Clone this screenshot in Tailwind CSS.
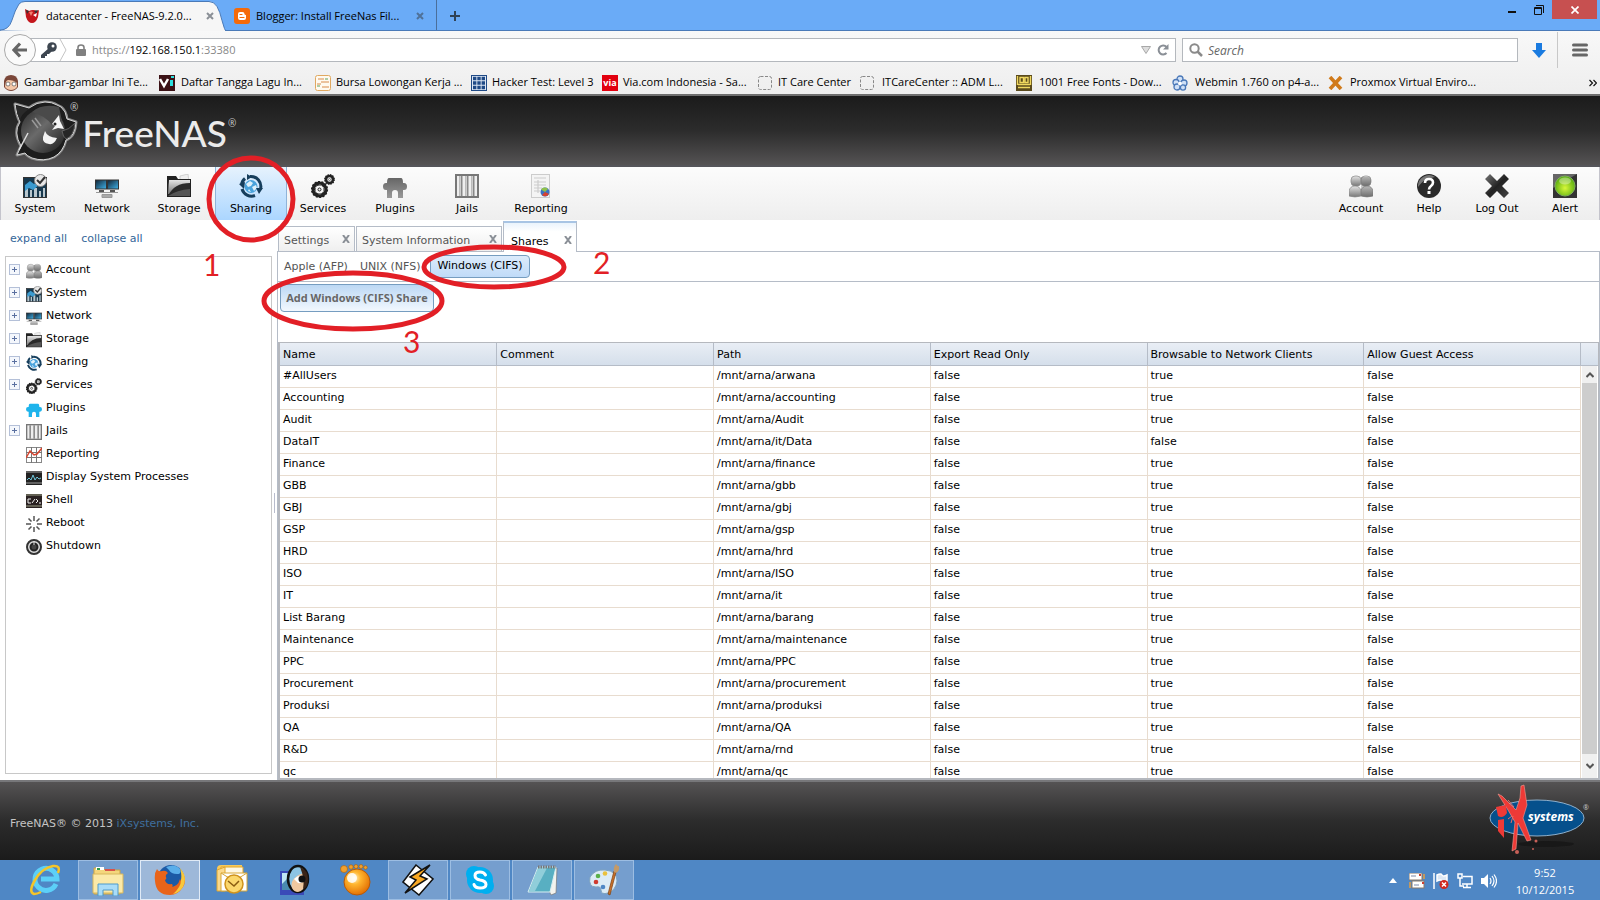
<!DOCTYPE html>
<html lang="en">

<head>
    <meta charset="UTF-8" />
    <meta name="viewport" content="width=device-width, initial-scale=1.0" />
    <title>datacenter - FreeNAS-9.2.0</title>
    <script src="https://cdn.jsdelivr.net/npm/@tailwindcss/browser@4"></script>
</head>

<body class="relative flex h-screen flex-col overflow-hidden bg-white font-['Open_Sans',sans-serif] text-[11px] text-black">

    <!-- Icon symbols -->
    <svg class="absolute size-0">
        <defs>
            <linearGradient id="g-steel" x1="0" y1="0" x2="0" y2="1">
                <stop offset="0" stop-color="#e4e4e4" />
                <stop offset="1" stop-color="#777" />
            </linearGradient>
            <linearGradient id="g-dark" x1="0" y1="0" x2="1" y2="1">
                <stop offset="0" stop-color="#777" />
                <stop offset=".5" stop-color="#222" />
                <stop offset="1" stop-color="#444" />
            </linearGradient>
            <linearGradient id="g-screen" x1="0" y1="0" x2="1" y2="1">
                <stop offset="0" stop-color="#123" />
                <stop offset="1" stop-color="#3fb3ea" />
            </linearGradient>
            <linearGradient id="g-plug" x1="0" y1="0" x2="0" y2="1">
                <stop offset="0" stop-color="#666" />
                <stop offset="1" stop-color="#999" />
            </linearGradient>
            <radialGradient id="g-green" cx=".5" cy=".6" r=".6">
                <stop offset="0" stop-color="#d8f83a" />
                <stop offset="1" stop-color="#4fa80c" />
            </radialGradient>
            <radialGradient id="g-orange" cx=".4" cy=".35" r=".7">
                <stop offset="0" stop-color="#fff3c8" />
                <stop offset=".35" stop-color="#ffb52e" />
                <stop offset="1" stop-color="#e06a00" />
            </radialGradient>
            <linearGradient id="g-shark" x1="0" y1="0" x2="1" y2="1">
                <stop offset="0" stop-color="#2a2a2a" />
                <stop offset=".45" stop-color="#6a6a6a" />
                <stop offset="1" stop-color="#1a1a1a" />
            </linearGradient>
        </defs>
        <symbol id="i-account" viewBox="0 0 24 24">
            <g fill="url(#g-steel)" stroke="#888" stroke-width=".7">
                <rect x="2" y="2" width="10" height="10" rx="4" />
                <rect x="12" y="2" width="10" height="10" rx="4" />
                <path d="M0 22v-5q1-5 6-5t6 5v5q-6 2-12 0z" />
                <path d="M12 22v-5q1-5 6-5t6 5v5q-6 2-12 0z" />
            </g>
            <path d="M12 3h7q3 0 3 4t-3 5q5 1 5 6v4q-6 2-12 0z" fill="#555" opacity=".3" />
        </symbol>
        <symbol id="i-system" viewBox="0 0 24 24">
            <rect x=".5" y="3.500" width="23" height="20" fill="#17384d" stroke="#333" />
            <path d="M2 23V13h3v10zM7 23v-7h2v7zM11 23V14h3v9zM16 23v-6h2v6zM20 23v-9h2v9z" fill="#b9c6cd" />
            <path d="M2 11l5-4 4 3 5-4v5l-6 5-4-2-4 3z" fill="#3b9bd0" />
            <circle cx="17.500" cy="6.500" r="6" fill="#e8e8e8" stroke="#888" />
            <path d="M14 6l3 3 5-6" fill="none" stroke="#333" stroke-width="2" />
        </symbol>
        <symbol id="i-network" viewBox="0 0 24 24">
            <rect x=".5" y="6" width="11" height="9" fill="url(#g-screen)" stroke="#333" />
            <rect x="12.500" y="6" width="11" height="9" fill="url(#g-screen)" stroke="#333" />
            <path d="M4 16h5v2H4zM15 16h5v2h-5z" fill="#555" />
            <path d="M1 18.500h22M7 20.500h10v3H7z" fill="#aaa" stroke="#999" />
        </symbol>
        <symbol id="i-storage" viewBox="0 0 24 24">
            <path d="M13 2l8-2 1 8H13z" fill="#eee" stroke="#bbb" stroke-width=".6" />
            <path d="M0 2h9l2 3h13v18H0z" fill="#222" />
            <path d="M1 20L2 6h21v14z" fill="url(#g-steel)" />
            <path d="M1 22Q7 9 23 9v13z" fill="#2a2a2a" />
            <path d="M1 22q9-6 22-7v7z" fill="#555" />
        </symbol>
        <symbol id="i-sharing" viewBox="0 0 24 24">
            <circle cx="12" cy="12.500" r="6.500" fill="#4aa3dc" />
            <path d="M7 10l4-3 3 2-2 3-3 1zM13 13l4-2 1 3-3 3zM10 15l2 3-3-1z" fill="#dff1fb" />
            <g fill="none" stroke="#163e5c" stroke-width="3">
                <path d="M11 2.500A10 10 0 0 1 21.500 15" />
                <path d="M16 21.500A10 10 0 0 1 3 15" />
                <path d="M2.500 11A10 10 0 0 1 6 4.500" />
            </g>
            <path d="M17 14h7l-4 6zM0 10l6-2-1 7zM8 6V0l5 3z" fill="#163e5c" />
        </symbol>
        <symbol id="i-services" viewBox="0 0 24 24">
            <g fill="none" stroke="#222">
                <circle cx="8.500" cy="15.500" r="6" stroke-width="4" />
                <circle cx="8.500" cy="15.500" r="7.800" stroke-width="1.600" stroke-dasharray="2 1.500" />
                <circle cx="8.500" cy="15.500" r="4.500" stroke="#999" stroke-width="1" stroke-dasharray="3 2" />
                <circle cx="8.500" cy="15.500" r="1.500" />
                <circle cx="18.500" cy="5.500" r="3.500" stroke-width="2.600" />
                <circle cx="18.500" cy="5.500" r="4.800" stroke-width="1.200" stroke-dasharray="1.500 1" />
                <circle cx="18.500" cy="5.500" r="1" stroke="#777" />
            </g>
        </symbol>
        <symbol id="i-plugins" viewBox="0 0 24 24">
            <path d="M6 4h12q2 0 2 5h1q3 0 3 3.500T21 16h-1v8h-5v-5q0-3-3-3t-3 3v5H4v-8H3q-3 0-3-3.500T3 9h1q0-5 2-5z" fill="currentColor" />
        </symbol>
        <symbol id="i-plugins-lg" viewBox="0 0 24 24">
            <path d="M6 4h12q2 0 2 5h1q3 0 3 3.500T21 16h-1v8h-5v-5q0-3-3-3t-3 3v5H4v-8H3q-3 0-3-3.500T3 9h1q0-5 2-5z" fill="url(#g-plug)" />
        </symbol>
        <symbol id="i-jails" viewBox="0 0 24 24">
            <rect x="1" y="1" width="22" height="22" fill="#eee" stroke="#777" stroke-width="2" />
            <path d="M6 2v20M12 2v20M18 2v20" stroke="#888" stroke-width="3" />
            <path d="M5.500 2v20M11.500 2v20M17.500 2v20" stroke="#ccc" stroke-width="1" />
        </symbol>
        <symbol id="i-report" viewBox="0 0 24 24">
            <rect x="2.500" y=".5" width="18" height="23" fill="#f4f4f4" stroke="#ccc" />
            <path d="M5 4h12M5 8h12M5 11h12M5 14h8M5 17h6M9 6v13" stroke="#ccc" stroke-width="1.200" />
            <circle cx="16" cy="18" r="4.500" fill="#3a72c4" />
            <path d="M16 18l-4-2.500A4.500 4.500 0 0 1 19 15z" fill="#8fc14a" />
            <path d="M16 18l4 2a4.500 4.500 0 0 1-7 1z" fill="#d8412f" />
        </symbol>
        <symbol id="i-help" viewBox="0 0 24 24">
            <circle cx="12" cy="12" r="12" fill="#2a2a2a" />
            <path d="M1 13A11 11 0 0 1 18 3Q6 5 1 13z" fill="#777" />
            <path d="M8 9q0-4 4-4t4 3.500q0 2-2 3.500t-2 3.500" fill="none" stroke="#fff" stroke-width="2.600" />
            <rect x="10.500" y="17" width="3" height="3" fill="#fff" />
        </symbol>
        <symbol id="i-logout" viewBox="0 0 24 24">
            <path d="M5 0l7 7 7-7 5 5-7 7 7 7-5 5-7-7-7 7-5-5 7-7-7-7z" fill="url(#g-dark)" />
        </symbol>
        <symbol id="i-alert" viewBox="0 0 24 24">
            <rect width="24" height="24" fill="#333" />
            <path d="M0 0h24L0 14z" fill="#666" />
            <circle cx="12" cy="12" r="10" fill="url(#g-green)" stroke="#7fae5a" />
            <ellipse cx="12" cy="7" rx="6" ry="3.500" fill="#fff" opacity=".35" />
        </symbol>
        <symbol id="i-chart" viewBox="0 0 16 16">
            <rect x=".5" y=".5" width="15" height="15" fill="#fff" stroke="#888" />
            <path d="M5.500 0v16M10.500 0v16M0 5.500h16M0 10.500h16" stroke="#777" />
            <path d="M0 11l4-7 4 4 3-1 5-6" fill="none" stroke="#d8452f" stroke-width="1.500" />
        </symbol>
        <symbol id="i-process" viewBox="0 0 16 16">
            <rect y="1" width="16" height="14" fill="#222" />
            <path d="M0 2h16M0 13h16" stroke="#777" stroke-width="1.500" />
            <path d="M1 10l2-2 2 2 2-5 2 5 2-3 2 2 2-1" fill="none" stroke="#6cc4d8" />
        </symbol>
        <symbol id="i-shell" viewBox="0 0 16 16">
            <rect y="1" width="16" height="14" fill="#2a2222" />
            <path d="M0 2h16M0 13h16" stroke="#777766" stroke-width="1.500" />
            <path d="M5 6H2v4h3M6 10l3-4M10 6l2 2-2 2M13 10h2" fill="none" stroke="#eee" />
        </symbol>
        <symbol id="i-reboot" viewBox="0 0 16 16">
            <path d="M8 0v5M8 11v5M0 8h5M11 8h5M2.500 2.500l3 3M10.500 10.500l3 3M13.500 2.500l-3 3M2.500 13.500l3-3" stroke="#555" stroke-width="1.500" />
        </symbol>
        <symbol id="i-shutdown" viewBox="0 0 16 16">
            <circle cx="8" cy="8" r="7" fill="#ddd" stroke="#333" stroke-width="2" />
            <circle cx="8" cy="8" r="3.500" fill="#444" stroke="#222" stroke-width="2" />
            <path d="M8 2v4" stroke="#ddd" stroke-width="1" />
        </symbol>
    </svg>

    <!-- Browser tabs -->
    <div class="relative flex h-[31px] shrink-0 items-stretch border-b border-[#4a7ab8] bg-[#6aabf7]">
        <div class="relative flex w-[228px] items-center pl-6 pt-[2px]">
            <svg class="absolute left-0 top-0 h-[31px] w-[228px]" viewBox="0 0 228 31">
                <path d="M0 31V30Q9 30 12 20T19 4q2-2.500 6-2.500H209q5 0 8 5t5 14 6 14.500z" fill="#f6f6f6" stroke="#4a7ab8" />
            </svg>
            <svg class="relative size-4" viewBox="0 0 16 16">
                <path d="M1 1l4 2q4-2 8 0l2-1-1 7q-2 6-6 6T2 9z" fill="#c4161c" />
                <path d="M2 2l3 1-2 3zM10 3l4-1-2 4z" fill="#333" />
                <path d="M5 4q3-1 4 0L7 8z" fill="#f08070" />
                <path d="M9 7l4-2-1 4z" fill="#fff" />
            </svg>
            <span class="relative ml-[6px] w-[152px] whitespace-nowrap">datacenter - FreeNAS-9.2.0...</span>
            <button class="relative ml-2" aria-label="Close tab">
                <svg class="size-2" viewBox="0 0 8 8"><path d="M1 1l6 6M7 1L1 7" stroke="#8a8f96" stroke-width="2" /></svg>
            </button>
        </div>
        <div class="flex w-[208px] items-center pl-[6px] pt-[2px]">
            <svg class="size-4" viewBox="0 0 16 16">
                <rect width="16" height="16" rx="3" fill="#f56a0a" />
                <path d="M6 4h2.500q2 0 2 2 0 1 1.500 1v3q0 2-2 2H6q-2 0-2-2V6q0-2 2-2z" fill="#fff" />
                <path d="M6 6.500h2M6 9.500h4" stroke="#f56a0a" stroke-width="1.200" stroke-linecap="round" />
            </svg>
            <span class="ml-[6px] w-[150px] whitespace-nowrap">Blogger: Install FreeNas Fil...</span>
            <button class="ml-[10px]" aria-label="Close tab">
                <svg class="size-2" viewBox="0 0 8 8"><path d="M1 1l6 6M7 1L1 7" stroke="#4f7199" stroke-width="2" /></svg>
            </button>
        </div>
        <button class="flex w-9 items-center justify-center border-l border-[#4a6f9c] pt-[2px]" aria-label="New tab">
            <svg class="size-[10px]" viewBox="0 0 10 10"><path d="M5 0v10M0 5h10" stroke="#2f4256" stroke-width="2" /></svg>
        </button>
        <div class="ml-auto flex h-[19px] items-center pr-[3px]">
            <button class="flex h-full w-[26px] items-center justify-center" aria-label="Minimize">
                <svg class="size-2" viewBox="0 0 8 8"><path d="M0 6h8" stroke="#111" stroke-width="2" /></svg>
            </button>
            <button class="flex h-full w-[27px] items-center justify-center" aria-label="Restore">
                <svg class="size-[10px]" viewBox="0 0 10 10">
                    <path d="M2 .5h7.500V8M.5 2.500h7v7h-7zM.5 3.500h7" fill="none" stroke="#111" />
                </svg>
            </button>
            <button class="flex h-full w-[45px] items-center justify-center bg-[#c75050]" aria-label="Close">
                <svg class="size-2" viewBox="0 0 8 8"><path d="M.5.5l7 7M7.500.5l-7 7" stroke="#fff" stroke-width="1.700" /></svg>
            </button>
        </div>
    </div>

    <!-- Address bar and bookmarks -->
    <div class="flex h-[65px] shrink-0 flex-col border-b-2 border-[#6e6e6e] bg-gradient-to-b from-[#f8f8f8] to-[#eeeeee]">
        <div class="flex h-[38px] shrink-0 items-center pr-3">
            <button class="z-10 ml-1 flex size-8 shrink-0 items-center justify-center rounded-full border border-[#a9a9a9] bg-[#fafafa]" aria-label="Back">
                <svg class="size-4" viewBox="0 0 16 16"><path d="M8 1.500L2 8l6 6.500M2.500 8H15" fill="none" stroke="#666" stroke-width="3.200" /></svg>
            </button>
            <div class="-ml-2 flex h-6 flex-1 items-center border border-[#b4b8bd] bg-white pl-3">
                <svg class="size-4 shrink-0" viewBox="0 0 16 16">
                    <circle cx="11" cy="5" r="4.800" fill="#3d4650" />
                    <path d="M8 6L0 13v3h4v-2h2v-2h2l3-3z" fill="#3d4650" />
                    <circle cx="12" cy="4" r="1.500" fill="#fff" />
                </svg>
                <svg class="ml-[2px] h-[22px] w-2 shrink-0" viewBox="0 0 8 22"><path d="M1 0l6 11-6 11" fill="none" stroke="#c4c4c4" /></svg>
                <svg class="ml-[9px] h-3 w-[10px] shrink-0" viewBox="0 0 10 12">
                    <rect y="5" width="10" height="7" rx="1" fill="#808080" />
                    <path d="M2 6V3.500q0-2.500 3-2.500t3 2.500V6" fill="none" stroke="#808080" stroke-width="1.600" />
                </svg>
                <input type="text" aria-label="Address" value="https://192.168.150.1:33380" class="sr-only" />
                <span class="ml-[6px] flex-1 whitespace-nowrap pt-px text-[#888]">https://<span class="text-black">192.168.150.1</span>:33380</span>
                <svg class="h-2 w-[10px]" viewBox="0 0 10 8"><path d="M.5.5h9L5 7.500z" fill="#ddd" stroke="#a8a8a8" /></svg>
                <button class="mx-[6px]" aria-label="Reload">
                    <svg class="size-3" viewBox="0 0 12 12">
                        <path d="M9.500 9A4.500 4.500 0 1 1 9.500 3" fill="none" stroke="#8a8f96" stroke-width="2" />
                        <path d="M11.500 0v5.500H6z" fill="#8a8f96" />
                    </svg>
                </button>
            </div>
            <div class="ml-[6px] flex h-6 w-[336px] items-center border border-[#b4b8bd] bg-white pl-[6px]">
                <svg class="size-[14px]" viewBox="0 0 14 14">
                    <circle cx="5.500" cy="5.500" r="4.200" fill="none" stroke="#8a8a8a" stroke-width="2" />
                    <path d="M8.500 8.500l4.500 4.500" stroke="#8a8a8a" stroke-width="2.500" />
                </svg>
                <input type="text" aria-label="Search" placeholder="Search" class="ml-[5px] flex-1 pt-px text-xs italic outline-none placeholder:text-[#666]" />
            </div>
            <button class="ml-[14px]" aria-label="Downloads">
                <svg class="h-[15px] w-[14px]" viewBox="0 0 14 15"><path d="M4 0h6v7h4l-7 8-7-8h4z" fill="#1a7be0" /></svg>
            </button>
            <div class="ml-[11px] h-9 w-px bg-[#c8c8c8]"></div>
            <button class="ml-[14px]" aria-label="Menu">
                <svg class="h-[14px] w-4" viewBox="0 0 16 14"><path d="M1.500 2h13M1.500 7h13M1.500 12h13" stroke="#666" stroke-width="3" stroke-linecap="round" /></svg>
            </button>
        </div>
        <nav class="flex flex-1 items-center whitespace-nowrap pl-[3px] pt-[2px]">
            <a href="#" class="flex w-[156px] items-center gap-[5px]">
                <svg class="size-4" viewBox="0 0 16 16">
                    <path d="M1 12V6q1-6 7-6t7 6v6q-3 4-7 4t-7-4z" fill="#7a4638" />
                    <path d="M2 12q0-6 3-7 6 0 9 3v4q-2 3-6 3t-6-3z" fill="#f4c7a8" />
                    <circle cx="5" cy="9" r="2" fill="#fff" stroke="#555" stroke-width=".7" />
                    <circle cx="11" cy="9" r="2" fill="#fff" stroke="#555" stroke-width=".7" />
                </svg>Gambar-gambar Ini Te...</a>
            <a href="#" class="flex w-[156px] items-center gap-[6px]">
                <svg class="size-4" viewBox="0 0 16 16">
                    <rect width="16" height="16" fill="#3c1216" />
                    <path d="M1 4l4 7 4-7" fill="none" stroke="#fff" stroke-width="2.500" />
                    <path d="M11 5h3v6h-3zM12 1h3v2h-3z" fill="#2de0e0" />
                </svg>Daftar Tangga Lagu In...</a>
            <a href="#" class="flex w-[156px] items-center gap-[5px]">
                <svg class="size-4" viewBox="0 0 16 16">
                    <rect x=".5" y=".5" width="15" height="15" rx="2" fill="#fffaf0" stroke="#e0a860" />
                    <path d="M3 4h6M6 7h8M2 9h4M7 12h7" stroke="#d88a4a" />
                    <path d="M2 11h3M10 4h3" stroke="#5aa05a" />
                </svg>Bursa Lowongan Kerja ...</a>
            <a href="#" class="flex w-[131px] items-center gap-[5px]">
                <svg class="size-4" viewBox="0 0 16 16">
                    <rect x=".5" y=".5" width="15" height="15" fill="#dfe8f4" stroke="#1f4a86" />
                    <path d="M2 3.500h12M2 8h12M2 12.500h12" stroke="#1f4a86" stroke-width="3.500" stroke-dasharray="3.400 .9" />
                </svg>Hacker Test: Level 3</a>
            <a href="#" class="flex w-[156px] items-center gap-[5px]">
                <span class="flex size-4 items-center justify-center bg-[#e2000f] text-[9px] font-bold text-white">via</span>Via.com Indonesia - Sa...</a>
            <a href="#" class="flex w-[102px] items-center gap-[6px]">
                <svg class="size-[14px]" viewBox="0 0 14 14"><rect x=".5" y=".5" width="13" height="13" rx="2" fill="none" stroke="#888" stroke-dasharray="3 1.500" /></svg>IT Care Center</a>
            <a href="#" class="flex w-[156px] items-center gap-[8px]">
                <svg class="size-[14px]" viewBox="0 0 14 14"><rect x=".5" y=".5" width="13" height="13" rx="2" fill="none" stroke="#888" stroke-dasharray="3 1.500" /></svg>ITCareCenter :: ADM L...</a>
            <a href="#" class="flex w-[156px] items-center gap-[7px]">
                <svg class="size-4" viewBox="0 0 16 16">
                    <rect width="16" height="16" fill="#5a4a1c" />
                    <path d="M1.500 1v9M4 2.500h3.500v5H4zM9 2.500h3v5H9zM14.500 1v9M2 9.500h12M2 12.500h12" fill="none" stroke="#f0d860" stroke-width="1.400" />
                </svg>1001 Free Fonts - Dow...</a>
            <a href="#" class="flex w-[156px] items-center gap-[7px]">
                <svg class="size-4" viewBox="0 0 16 16">
                    <g fill="#cfe0f6" stroke="#4a78b8" stroke-width="1.300">
                        <circle cx="8" cy="4" r="3" /><circle cx="4" cy="7.500" r="3" /><circle cx="12" cy="8" r="3" /><circle cx="5" cy="12" r="3" /><circle cx="11" cy="12.500" r="2.600" />
                    </g>
                    <circle cx="8" cy="8.500" r="2" fill="#fff" />
                </svg>Webmin 1.760 on p4-a...</a>
            <a href="#" class="flex items-center gap-[7px]">
                <svg class="h-[14px] w-[15px]" viewBox="0 0 15 14"><path d="M2 1l11 12M13 1L2 13" stroke="#d07a1a" stroke-width="3.600" /></svg>Proxmox Virtual Enviro...</a>
            <button class="ml-auto mr-[3px]" aria-label="More bookmarks">
                <svg class="size-2" viewBox="0 0 8 8"><path d="M.5 1l3 3-3 3M4.500 1l3 3-3 3" fill="none" stroke="#111" stroke-width="1.200" /></svg>
            </button>
        </nav>
    </div>

    <!-- Product header -->
    <header class="flex h-[71px] shrink-0 items-center border-b-2 border-[#55555a] bg-gradient-to-b from-[#1b1b1b] via-[#2c2c2c] to-[#555354] pl-3">
        <svg class="h-[62px] w-[66px]" viewBox="0 0 66 62">
            <path d="M3 4l14 4Q25 2 33 2q7 0 12 3l4 2q5 4 6 12l9 3q-1 15-10 18-3 12-12 17-10 5-22 1-5-2-7-5l-8 2 4-9Q1 32 8 22 4 14 3 4z" fill="#1d1d1d" stroke="#8a8a8a" stroke-width="3" stroke-linejoin="round" />
            <path d="M3 4l14 4Q25 2 33 2q7 0 12 3l4 2q5 4 6 12l9 3q-1 15-10 18-3 12-12 17-10 5-22 1-5-2-7-5l-8 2 4-9Q1 32 8 22 4 14 3 4z" fill="#1d1d1d" stroke="#d4d4d4" stroke-width="1" stroke-linejoin="round" />
            <circle cx="31" cy="31" r="22" fill="url(#g-shark)" />
            <path d="M20 12q10-9 27-5l3 14-10 4q-6-9-20-13z" fill="#4a4a4a" />
            <path d="M4 6l13 3Q8 15 8 21 5 14 4 6z" fill="#2a2a2a" />
            <path d="M40 24l7-9 1 6 4 8-6-1-6 2 3-4z" fill="#f6f6f6" />
            <circle cx="43" cy="24" r="1.500" fill="#222" />
            <path d="M33 31q2 6 12 7-3 7-8 6-7-1-6-7z" fill="#f2f2f2" />
            <path d="M50 31q7-1 13-8-1 13-9 16-3-2-4-8z" fill="#262626" stroke="#777" stroke-width=".7" />
            <path d="M7 50l9-17" stroke="#ddd" stroke-width="1.500" />
            <path d="M20 20l6 8M23 18l6 8" stroke="#999" stroke-width="1.500" />
        </svg>
        <span class="-ml-2 self-start pt-1 text-[10px] text-[#c8c8c8]">®</span>
        <h1 class="ml-[4px] mt-1 font-['Lato',sans-serif] text-[37px] leading-none font-medium text-[#ebebeb]">FreeNAS</h1>
        <span class="ml-px self-start pt-5 text-[10px] text-[#c8c8c8]">®</span>
    </header>

    <!-- Toolbar -->
    <nav class="flex h-[53px] shrink-0 justify-between border-x border-[#c4c4cc] bg-gradient-to-b from-[#fcfcfc] to-[#eeeeee] font-['DejaVu_Sans',sans-serif]">
        <div id="toolbar-left" class="-ml-[2px] flex"></div>
        <div id="toolbar-right" class="flex"></div>
    </nav>

    <!-- Main area -->
    <main class="flex min-h-0 flex-1 font-['DejaVu_Sans',sans-serif] text-[11px]">
        <aside class="flex w-[277px] shrink-0 flex-col pb-[6px] pl-[5px]">
            <div class="flex h-9 shrink-0 items-center gap-[14px] pl-[5px] pt-[2px] text-[#336699]">
                <a href="#">expand all</a>
                <a href="#">collapse all</a>
            </div>
            <div class="flex min-h-0 flex-1 items-center gap-[2px]">
                <ul id="tree" class="h-full w-[267px] border border-[#c8c8c8] pt-px"></ul>
                <div class="mb-6 h-5 w-px bg-[#b8bccc]"></div>
            </div>
        </aside>

        <section class="flex min-w-0 flex-1 flex-col">
            <!-- Page tabs -->
            <div class="flex h-8 shrink-0 items-end gap-px border-b border-[#b5bcc7] pl-px text-[#555]">
                <div class="flex h-[25px] w-[77px] items-center justify-between border border-b-0 border-[#b5bcc7] bg-gradient-to-b from-white to-[#efefef] pl-[5px] pr-1">
                    <button class="pt-[5px]">Settings</button>
                    <button aria-label="Close Settings">
                        <svg class="size-2" viewBox="0 0 8 8"><path d="M1 0l6 8M7 0L1 8" stroke="#8a8f96" stroke-width="2" /></svg>
                    </button>
                </div>
                <div class="flex h-[25px] w-[146px] items-center justify-between border border-b-0 border-[#b5bcc7] bg-gradient-to-b from-white to-[#efefef] pl-[5px] pr-1">
                    <button class="pt-[5px]">System Information</button>
                    <button aria-label="Close System Information">
                        <svg class="size-2" viewBox="0 0 8 8"><path d="M1 0l6 8M7 0L1 8" stroke="#8a8f96" stroke-width="2" /></svg>
                    </button>
                </div>
                <div class="-mb-px flex h-[31px] w-[74px] items-center justify-between border border-b-0 border-t-2 border-[#b5bcc7] border-t-[#a8c4e4] bg-gradient-to-b from-[#eaf3fc] to-white to-30% pl-[7px] pr-1 pt-[5px]">
                    <button class="pt-[5px] text-black">Shares</button>
                    <button aria-label="Close Shares">
                        <svg class="size-2" viewBox="0 0 8 8"><path d="M1 0l6 8M7 0L1 8" stroke="#8a8f96" stroke-width="2" /></svg>
                    </button>
                </div>
            </div>
            <div class="flex min-h-0 flex-1 flex-col border-x border-[#b5bcc7]">
                <!-- Share types -->
                <div class="flex h-[30px] shrink-0 items-center border-b border-[#b5bcc7] pl-[6px] text-[#555]">
                    <button class="w-[76px] pt-[2px] text-left">Apple (AFP)</button>
                    <button class="w-[70px] pt-[2px] text-left">UNIX (NFS)</button>
                    <button class="h-[23px] w-[100px] whitespace-nowrap rounded-sm border border-[#769dc0] bg-gradient-to-b from-[#dcebfb] to-[#c0dbf8] text-black">Windows (CIFS)</button>
                </div>
                <div class="h-[60px] shrink-0 pl-[2px] pt-[2px]">
                    <button class="h-7 w-[154px] whitespace-nowrap rounded border border-[#769dc0] bg-gradient-to-b from-[#bcd8f4] to-[#f2f8fe] text-[11px] font-bold text-[#666] font-['Open_Sans',sans-serif]">Add Windows (CIFS) Share</button>
                </div>
                <!-- Shares grid -->
                <div class="flex min-h-0 flex-1 border-2 border-r border-t border-[#b5b8be]">
                    <div class="min-w-0 flex-1 overflow-hidden">
                        <table class="w-full table-fixed border-collapse">
                            <thead>
                                <tr id="grid-head" class="h-[22px] bg-gradient-to-b from-[#e9eef5] to-[#d5dfeb]"></tr>
                            </thead>
                            <tbody id="grid-body"></tbody>
                        </table>
                    </div>
                    <div class="flex w-[17px] flex-col">
                        <div class="h-[23px] shrink-0 border-b border-[#b5bcc7] bg-gradient-to-b from-[#e9eef5] to-[#d5dfeb]"></div>
                        <div class="mx-px flex min-h-0 flex-1 flex-col bg-[#f0f0f0]">
                            <button class="flex h-[17px] items-center justify-center" aria-label="Scroll up">
                                <svg class="h-2 w-2" viewBox="0 0 8 8"><path d="M.5 6L4 2.500 7.500 6" fill="none" stroke="#555" stroke-width="2" /></svg>
                            </button>
                            <div class="flex-1 bg-[#cdcdcd]"></div>
                            <button class="flex h-6 items-center justify-center" aria-label="Scroll down">
                                <svg class="h-2 w-2" viewBox="0 0 8 8"><path d="M.5 2L4 5.500 7.500 2" fill="none" stroke="#555" stroke-width="2" /></svg>
                            </button>
                        </div>
                    </div>
                </div>
            </div>
        </section>
    </main>

    <!-- Footer -->
    <footer class="flex h-20 shrink-0 items-center justify-between border-t-2 border-[#77777a] bg-gradient-to-b from-[#555354] via-[#2c2c2c] to-[#1b1b1b] pl-[10px] pr-[10px] font-['DejaVu_Sans',sans-serif] text-[11px] text-[#c4c4c4]">
        <p class="pt-[6px]">FreeNAS® © 2013 <a href="#" class="text-[#3f6f9f]">iXsystems, Inc.</a></p>
        <svg class="mb-1 h-[72px] w-[102px]" viewBox="0 0 102 72">
            <ellipse cx="58" cy="61" rx="28" ry="3" fill="#181818" />
            <ellipse cx="49" cy="35" rx="47" ry="18" fill="#05508c" stroke="#8fb0cc" />
            <path d="M33 3l3-1 3 20-4 13 8 22-4 1-9-18-2 26-4 2 3-29-7-12-10-16 4 2 14 14 4-12z" fill="#ee3a36" stroke="#f59a90" stroke-width=".6" />
            <path d="M8 24l10-2 1 8q-4 6-9 3zM10 37l6-1v19l-6-7z" fill="#ee3a36" />
            <path d="M20 36l4-3M23 40l2-7M20 17l6 7" stroke="#ee6a66" />
            <circle cx="48" cy="58" r="1.500" fill="#c86058" />
            <circle cx="45" cy="66" r="1" fill="#c86058" />
            <circle cx="29" cy="69" r="2" fill="#c86058" />
            <text x="40" y="38" font-family="Open Sans, sans-serif" font-size="12" font-weight="700" font-style="italic" fill="#fff">systems</text>
            <text x="95" y="27" font-family="Open Sans, sans-serif" font-size="7" fill="#ccc">®</text>
        </svg>
    </footer>

    <!-- Taskbar -->
    <div class="flex h-10 shrink-0 items-stretch gap-[2px] bg-[#4f87c5] pl-4 text-white">
        <button class="flex w-[60px] items-center justify-center" aria-label="Internet Explorer">
            <svg class="size-8" viewBox="0 0 32 32">
                <path d="M26 20a11 11 0 1 1 1-5H11" fill="none" stroke="#5cd0f8" stroke-width="5" />
                <path d="M28 9q3-8-5-7Q12 4 5 16-2 28 4 30q3 0 7-2" fill="none" stroke="#f4c52a" stroke-width="2.500" />
            </svg>
        </button>
        <button class="flex w-[60px] items-center justify-center border border-[#9cbde2] bg-[#759ece]" aria-label="File Explorer">
            <svg class="size-8" viewBox="0 0 32 32">
                <path d="M2 4h9l2 2h15v24H2z" fill="#f4d67c" stroke="#c9a345" />
                <path d="M4 3h8v3H4z" fill="#fff" />
                <path d="M5 4h3v2H5z" fill="#2f9a48" />
                <path d="M13 5h10v2H13z" fill="#d9534a" />
                <path d="M1 10h30v19H1z" fill="#fbe9a8" stroke="#d8b75c" />
                <path d="M6 32V20h20v12h-5v-6H11v6z" fill="#a9dcf8" stroke="#4f9acb" />
            </svg>
        </button>
        <button class="flex w-[60px] items-center justify-center border border-[#e0eaf6] bg-[#9db8d9]" aria-label="Firefox">
            <svg class="size-8" viewBox="0 0 32 32">
                <circle cx="17" cy="14" r="13" fill="#1c5aa6" />
                <path d="M12 3q9-4 14 2 2 5-3 5-6 0-8-4z" fill="#5aaeea" />
                <path d="M3 5q1 3 5 2 4-1 6 2-3 2-2 4 1 2-1 3 1 5 7 4 2 3-2 3 8 0 10-8 2 3 1 6 3-4 2-12 4 8 0 14-5 8-13 8Q2 31 1 17 0 9 3 5z" fill="#e8641a" />
                <path d="M26 4q8 9 3 19-4 6-10 7 8-7 8-14 1-6-1-12z" fill="#f8c83c" />
            </svg>
        </button>
        <button class="flex w-[60px] items-center justify-center" aria-label="Outlook">
            <svg class="size-8" viewBox="0 0 32 32">
                <path d="M1 5q0-4 4-4h21v8H1z" fill="#f8c95a" />
                <path d="M5 3h22v10H5z" fill="#fff8e4" stroke="#e0a52c" />
                <path d="M1 6l8-3v24H1z" fill="#fbd98c" stroke="#e0a52c" />
                <path d="M5 9h26v18H5z" fill="#fff" stroke="#d8a838" />
                <path d="M5 9l13 8 13-8" fill="none" stroke="#d8a838" />
                <circle cx="18" cy="20" r="9" fill="#fbd76c" stroke="#cf921c" stroke-width="1.500" />
                <path d="M12 17l6 5 5-5" fill="none" stroke="#8a5c10" stroke-width="1.500" />
            </svg>
        </button>
        <button class="flex w-[60px] items-center justify-center" aria-label="Image viewer">
            <svg class="size-8" viewBox="0 0 32 32">
                <path d="M2 7h24v24H2z" fill="#3a4ab8" />
                <path d="M4 9h17v17H4z" fill="#bfe6f4" />
                <path d="M4 20l8-8 6 14H4z" fill="#4a8ab0" />
                <ellipse cx="20" cy="15" rx="10" ry="13" fill="#8cc4e4" stroke="#111" stroke-width="2.500" />
                <path d="M14 24q-2-7 5-12t8 0l2 6q-3 9-9 10-4 0-6-4z" fill="#f0c8a0" />
                <path d="M16 15q6-6 12-1-3 6-8 5z" fill="#fff" />
                <path d="M22 3q8 3 8 12t-5 10q2-10-3-22z" fill="#3a2418" />
                <circle cx="24" cy="15" r="3.500" fill="#111" />
            </svg>
        </button>
        <button class="flex w-[60px] items-center justify-center" aria-label="GOM Player">
            <svg class="size-8" viewBox="0 0 32 32">
                <circle cx="17" cy="18" r="13" fill="url(#g-orange)" stroke="#b85a08" />
                <g fill="#f2a02c" stroke="#a8600c" stroke-width=".6">
                    <circle cx="4" cy="5" r="3.500" /><circle cx="11" cy="3" r="2.200" /><circle cx="16" cy="2.500" r="2" /><circle cx="21" cy="2.500" r="2" /><circle cx="25.500" cy="3.500" r="1.800" />
                </g>
                <circle cx="12" cy="14" r="5" fill="#fff" opacity=".85" />
            </svg>
        </button>
        <button class="flex w-[60px] items-center justify-center border border-[#9cbde2] bg-[#759ece]" aria-label="Winamp">
            <svg class="size-8" viewBox="0 0 32 32">
                <path d="M14 1l17 14-14 16L1 18z" fill="#fff" stroke="#111" stroke-width="1.500" />
                <path d="M28 1L8 13l6 3-11 13 22-14-7-3z" fill="#f9a822" stroke="#111" stroke-width="1.500" />
            </svg>
        </button>
        <button class="flex w-[60px] items-center justify-center border border-[#9cbde2] bg-[#759ece]" aria-label="Skype">
            <svg class="size-8" viewBox="0 0 32 32">
                <circle cx="10" cy="10" r="8" fill="#00aff0" /><circle cx="22" cy="22" r="8" fill="#00aff0" /><circle cx="16" cy="16" r="13" fill="#00aff0" />
                <path d="M21.500 11q-1.500-3-5.500-3-5 0-5 3.500T16 16q6 1 6 4.500T16 24q-5 0-6-3.500" fill="none" stroke="#fff" stroke-width="3" stroke-linecap="round" />
            </svg>
        </button>
        <button class="flex w-[60px] items-center justify-center border border-[#9cbde2] bg-[#759ece]" aria-label="Notepad">
            <svg class="size-8" viewBox="0 0 32 32">
                <path d="M12 4h19l-1 25-5 2z" fill="#f3f3ee" stroke="#777" stroke-width=".7" />
                <path d="M12 3h18l-6 25H2z" fill="#58afc2" stroke="#d8eef2" />
                <path d="M12 4h9L9 27H3z" fill="#a8dbe4" opacity=".7" />
                <path d="M12 3h18" stroke="#777" stroke-width="3" stroke-dasharray="1.500 1" />
            </svg>
        </button>
        <button class="flex w-[60px] items-center justify-center border border-[#9cbde2] bg-[#759ece]" aria-label="Paint">
            <svg class="size-8" viewBox="0 0 32 32">
                <path d="M2 13Q7 5 17 6q12 1 12 11-1 9-9 12-7 2-7-3 0-4-5-3-8 0-6-10z" fill="#dcebf5" stroke="#7fa4c0" />
                <circle cx="8" cy="18" r="2.300" fill="#cf3b30" /><circle cx="10" cy="12" r="2.300" fill="#5ab04a" /><circle cx="17" cy="9.500" r="2.300" fill="#eac13c" /><circle cx="15" cy="23" r="2.300" fill="#4f87c5" />
                <path d="M26 7l2 1-6 23-2-1z" fill="#c8702a" stroke="#7c4010" stroke-width=".7" />
                <path d="M26 8q-1-5 2-8 2 3 3 2 1 5-3 7z" fill="#c49a68" />
            </svg>
        </button>
        <div class="ml-auto flex items-center pr-[25px] pt-px">
            <svg class="h-[5px] w-2" viewBox="0 0 8 5"><path d="M0 5l4-5 4 5z" fill="#fff" /></svg>
            <svg class="ml-[12px] size-4" viewBox="0 0 16 16">
                <rect x="0" y="0" width="13" height="7" fill="#fff" stroke="#8a7a6a" /><rect x="3" y="8" width="12" height="7" fill="#fff" stroke="#8a7a6a" />
                <path d="M2 3h5M5 12h5" stroke="#7a8aaa" /><path d="M10 1h2v2h-2zM13 9h2v2h-2z" fill="#d0402f" /><path d="M15 1v5M1 9v6" stroke="#e8a040" stroke-width="1.500" />
            </svg>
            <svg class="ml-2 size-4" viewBox="0 0 16 16">
                <path d="M1 0v16M4 2q4-2 5 0t5 0v7q-4 1-5-1t-5 0z" fill="#fff" fill-opacity=".8" stroke="#fff" stroke-width="1.500" />
                <circle cx="11" cy="11.500" r="4.500" fill="#d0281f" /><path d="M9 9.500l4 4M13 9.500l-4 4" stroke="#fff" stroke-width="1.500" />
            </svg>
            <svg class="ml-2 size-4" viewBox="0 0 16 16">
                <path d="M6 3.500h9v7.500H5M10 11v3M6 14.500h8M1 1h4v4H1zM3 5v8h4" fill="none" stroke="#fff" stroke-width="1.500" />
            </svg>
            <svg class="ml-2 size-4" viewBox="0 0 16 16">
                <path d="M0 5h3l4-4v14l-4-4H0z" fill="#fff" /><path d="M9 5q2 3 0 6M11 3q4 5 0 10M13 1.500q5 6.500 0 13" fill="none" stroke="#fff" stroke-width="1.200" />
            </svg>
            <div class="ml-[18px] w-[60px] text-center leading-[17px]">
                <div>9:52</div>
                <div>10/12/2015</div>
            </div>
        </div>
    </div>

    <!-- Step markers drawn over the page -->
    <svg class="pointer-events-none absolute left-0 top-0 h-[400px] w-[700px] font-['Lato',sans-serif] text-[30px]" viewBox="0 0 700 400" fill="none" stroke="#e21f26" stroke-width="5">
        <ellipse cx="251" cy="199" rx="42" ry="41" />
        <ellipse cx="494" cy="267" rx="70" ry="20" />
        <ellipse cx="353" cy="301" rx="89" ry="28" />
        <g fill="#e21f26" stroke="none">
            <text x="203" y="276">1</text>
            <text x="593" y="274">2</text>
            <text x="403" y="353">3</text>
        </g>
    </svg>

    <script>
        const leftTools = [
            ['System', 'i-system'], ['Network', 'i-network'], ['Storage', 'i-storage'], ['Sharing', 'i-sharing'],
            ['Services', 'i-services'], ['Plugins', 'i-plugins-lg'], ['Jails', 'i-jails'], ['Reporting', 'i-report']
        ];
        const rightTools = [['Account', 'i-account'], ['Help', 'i-help'], ['Log Out', 'i-logout'], ['Alert', 'i-alert']];

        const toolButton = (label, icon, width) => `
            <button class="flex ${width} flex-col items-center border-x pt-[7px] text-[11px] ${label === 'Sharing' ? 'border-[#8fb3d9] bg-gradient-to-b from-[#e6f2fd] to-[#abd6ff]' : 'border-transparent'}">
                <svg class="size-6"><use href="#${icon}" /></svg>
                <span class="mt-[3px] leading-4">${label}</span>
            </button>`;
        document.getElementById('toolbar-left').innerHTML = leftTools.map(([l, i]) =>
            toolButton(l, i, l === 'Reporting' ? 'w-[76px]' : 'w-[72px]')).join('');
        document.getElementById('toolbar-right').innerHTML = rightTools.map(([l, i]) => toolButton(l, i, 'w-[68px]')).join('');

        // label, icon, expandable
        const tree = [
            ['Account', 'i-account', 1], ['System', 'i-system', 1], ['Network', 'i-network', 1], ['Storage', 'i-storage', 1],
            ['Sharing', 'i-sharing', 1], ['Services', 'i-services', 1], ['Plugins', 'i-plugins', 0], ['Jails', 'i-jails', 1],
            ['Reporting', 'i-chart', 0], ['Display System Processes', 'i-process', 0], ['Shell', 'i-shell', 0],
            ['Reboot', 'i-reboot', 0], ['Shutdown', 'i-shutdown', 0]
        ];
        document.getElementById('tree').innerHTML = tree.map(([label, icon, open]) => `
            <li class="flex h-[23px] items-center pl-[3px]">
                ${open ? `<button class="size-[11px] border border-[#b4c0d8] bg-[#f4f7fc]" aria-label="Expand ${label}">
                    <svg class="size-[9px]" viewBox="0 0 9 9"><path d="M4.500 2v5M2 4.500h5" stroke="#5a70a0" /></svg>
                </button>` : '<span class="size-[11px]"></span>'}
                <svg class="ml-[6px] mt-[2px] size-4 text-[#1eb4ec]"><use href="#${icon}" /></svg>
                <a href="#" class="ml-1 pt-px">${label}</a>
            </li>`).join('');

        const columns = ['Name', 'Comment', 'Path', 'Export Read Only', 'Browsable to Network Clients', 'Allow Guest Access'];
        const shares = [
            ['#AllUsers', 'arwana'], ['Accounting', 'accounting'], ['Audit', 'Audit'], ['DataIT', 'it/Data'],
            ['Finance', 'finance'], ['GBB', 'gbb'], ['GBJ', 'gbj'], ['GSP', 'gsp'], ['HRD', 'hrd'], ['ISO', 'ISO'],
            ['IT', 'it'], ['List Barang', 'barang'], ['Maintenance', 'maintenance'], ['PPC', 'PPC'],
            ['Procurement', 'procurement'], ['Produksi', 'produksi'], ['QA', 'QA'], ['R&amp;D', 'rnd'], ['qc', 'qc']
        ];
        document.getElementById('grid-head').innerHTML = columns.map(c =>
            `<th class="whitespace-nowrap border-b border-r border-[#b5bcc7] pl-[3px] pt-[2px] text-left font-normal">${c}</th>`).join('');
        document.getElementById('grid-body').innerHTML = shares.map(([name, path]) => {
            const cells = [name, '', '/mnt/arna/' + path, 'false', name === 'DataIT' ? 'false' : 'true', 'false'];
            return `<tr class="h-[22px]">${cells.map(c =>
                `<td class="whitespace-nowrap border-b border-r border-[#e8dccf] pl-[3px] pt-px">${c}</td>`).join('')}</tr>`;
        }).join('');
    </script>
</body>

</html>
